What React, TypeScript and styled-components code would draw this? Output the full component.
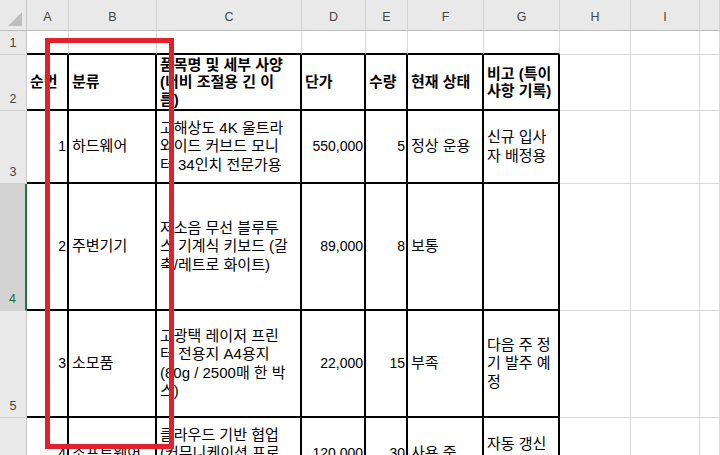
import React from "react";
import styled, { createGlobalStyle, css } from "styled-components";

const GlobalStyle = createGlobalStyle`
  html, body { margin: 0; padding: 0; background: #ffffff; }
  body { font-family: "Liberation Sans", "Noto Sans CJK KR", sans-serif; }
`;

const COLS = [27, 42, 88, 145, 64, 42, 76, 76, 71, 69];
const LETTERS = ["A", "B", "C", "D", "E", "F", "G", "H", "I", "J"];

const Frame = styled.div`
  position: relative;
  width: 720px;
  height: 455px;
  overflow: hidden;
  background: #ffffff;
`;

const Sheet = styled.div`
  display: grid;
  grid-template-columns: ${COLS.map((c) => c + "px").join(" ")} 1fr;
  grid-template-rows: 31px 24px 56px 73px 127px 107px 73px;
  width: 720px;
`;

const headFont = css`
  font-family: "Liberation Sans", "Noto Sans", sans-serif;
  font-size: 12.5px;
  line-height: 14px;
  color: #444444;
`;

const Corner = styled.div`
  background: #e9e9e9;
  border-right: 1px solid #c9c9c9;
  border-bottom: 1px solid #bcbcbc;
  box-sizing: border-box;
  display: flex;
  align-items: flex-end;
  justify-content: flex-end;
  padding: 0 3px 3px 0;
`;

const ColHead = styled.div`
  ${headFont};
  background: #e9e9e9;
  border-right: 1px solid #d2d2d2;
  border-bottom: 1px solid #bcbcbc;
  box-sizing: border-box;
  display: flex;
  align-items: flex-end;
  justify-content: center;
  padding-bottom: 6px;
`;

const RowHead = styled.div<{ $active?: boolean }>`
  ${headFont};
  background: ${(p) => (p.$active ? "#d3d3d3" : "#e9e9e9")};
  color: ${(p) => (p.$active ? "#1e6b41" : "#444444")};
  border-right: ${(p) => (p.$active ? "2px solid #217346" : "1px solid #c9c9c9")};
  border-bottom: 1px solid #d2d2d2;
  box-sizing: border-box;
  display: flex;
  align-items: flex-end;
  justify-content: center;
  padding-bottom: 4px;
`;

const Cell = styled.div<{
  $boxR?: boolean;
  $boxB?: boolean;
  $right?: boolean;
  $bold?: boolean;
  $num?: boolean;
}>`
  box-sizing: border-box;
  background: #ffffff;
  border-right: ${(p) => (p.$boxR ? "2px solid #000000" : "1px solid #d9d9d9")};
  border-bottom: ${(p) => (p.$boxB ? "2px solid #000000" : "1px solid #d9d9d9")};
  display: flex;
  flex-direction: column;
  justify-content: center;
  align-items: ${(p) => (p.$right ? "flex-end" : "flex-start")};
  padding: 0 1px 0 3px;
  overflow: hidden;
  color: #000000;
  font-size: ${(p) => (p.$num ? "14px" : "15px")};
  font-weight: ${(p) => (p.$bold ? 700 : 400)};
  line-height: ${(p) => (p.$bold ? "17.5px" : "18.5px")};
`;

const Line = styled.span`
  display: block;
  white-space: nowrap;
`;

const Highlight = styled.div`
  position: absolute;
  left: 45px;
  top: 38px;
  width: 129px;
  height: 411px;
  box-sizing: border-box;
  border: 5px solid #e1212b;
  pointer-events: none;
`;

type CellData = { t: string[]; right?: boolean; num?: boolean };

const header: CellData[] = [
  { t: ["순번"] },
  { t: ["분류"] },
  { t: ["품목명 및 세부 사양", "(너비 조절용 긴 이", "름)"] },
  { t: ["단가"] },
  { t: ["수량"] },
  { t: ["현재 상태"] },
  { t: ["비고 (특이", "사항 기록)"] },
];

const body: CellData[][] = [
  [
    { t: ["1"], right: true, num: true },
    { t: ["하드웨어"] },
    { t: ["고해상도 4K 울트라", "와이드 커브드 모니", "터 34인치 전문가용"] },
    { t: ["550,000"], right: true, num: true },
    { t: ["5"], right: true, num: true },
    { t: ["정상 운용"] },
    { t: ["신규 입사", "자 배정용"] },
  ],
  [
    { t: ["2"], right: true, num: true },
    { t: ["주변기기"] },
    { t: ["저소음 무선 블루투", "스 기계식 키보드 (갈", "축/레트로 화이트)"] },
    { t: ["89,000"], right: true, num: true },
    { t: ["8"], right: true, num: true },
    { t: ["보통"] },
    { t: [] },
  ],
  [
    { t: ["3"], right: true, num: true },
    { t: ["소모품"] },
    { t: ["고광택 레이저 프린", "터 전용지 A4용지", "(80g / 2500매 한 박", "스)"] },
    { t: ["22,000"], right: true, num: true },
    { t: ["15"], right: true, num: true },
    { t: ["부족"] },
    { t: ["다음 주 정", "기 발주 예", "정"] },
  ],
  [
    { t: ["4"], right: true, num: true },
    { t: ["소프트웨어"] },
    { t: ["클라우드 기반 협업", "(커뮤니케이션 프로", "그램) 연간 구독"] },
    { t: ["120,000"], right: true, num: true },
    { t: ["30"], right: true, num: true },
    { t: ["사용 중"] },
    { t: ["자동 갱신", "(연간 계약)"] },
  ],
];

const SelectAll = () => (
  <svg width="15" height="15" viewBox="0 0 15 15">
    <polygon points="14,0 14,14 0,14" fill="#bdbdbd" />
  </svg>
);

const EXTRA = 3; // H, I, J columns

function renderRow(cells: CellData[], bold: boolean) {
  return (
    <>
      {cells.map((c, i) => (
        <Cell key={i} $boxR $boxB $right={c.right} $num={c.num} $bold={bold}>
          {c.t.map((l, j) => (
            <Line key={j}>{l}</Line>
          ))}
        </Cell>
      ))}
      {Array.from({ length: EXTRA }).map((_, i) => (
        <Cell key={"x" + i} />
      ))}
    </>
  );
}

export default function App() {
  return (
    <>
      <GlobalStyle />
      <Frame>
        <Sheet>
          <Corner>
            <SelectAll />
          </Corner>
          {LETTERS.map((l) => (
            <ColHead key={l}>{l === "J" ? "" : l}</ColHead>
          ))}

          <RowHead>1</RowHead>
          {Array.from({ length: 7 }).map((_, i) => (
            <Cell key={"r1" + i} $boxB />
          ))}
          {Array.from({ length: EXTRA }).map((_, i) => (
            <Cell key={"r1x" + i} />
          ))}

          <RowHead>2</RowHead>
          {renderRow(header, true)}

          {body.map((row, i) => (
            <React.Fragment key={i}>
              <RowHead $active={i === 1}>{i + 3}</RowHead>
              {renderRow(row, false)}
            </React.Fragment>
          ))}
        </Sheet>
        <Highlight />
      </Frame>
    </>
  );
}
